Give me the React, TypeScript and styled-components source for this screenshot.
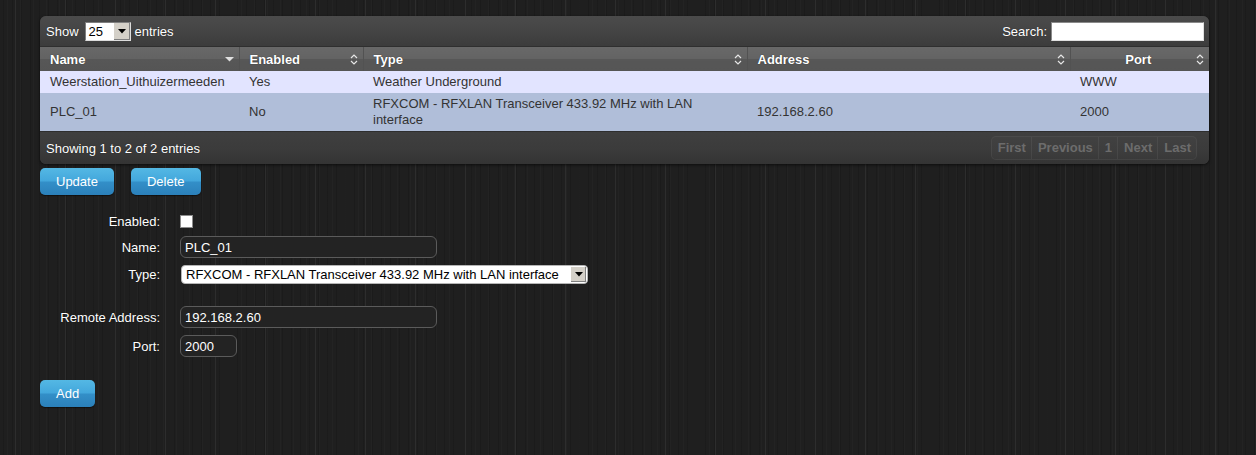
import React from "react";
import styled, { createGlobalStyle } from "styled-components";

const GlobalStyle = createGlobalStyle`
  html, body {
    margin: 0;
    padding: 0;
    min-height: 455px;
  }
  body {
    font-family: "Liberation Sans", Arial, sans-serif;
    font-size: 13px;
    color: #fff;
    background-color: #1f1f1f;
    background-image:
      repeating-linear-gradient(90deg, transparent 0 15px, #2d2d2d 15px 16px, transparent 16px 50px),
      repeating-linear-gradient(90deg, transparent 0 7px, rgba(255,255,255,0.018) 7px 8px, transparent 8px 13px),
      repeating-linear-gradient(90deg, transparent 0 3px, rgba(0,0,0,0.12) 3px 4px, transparent 4px 9px);
  }
`;

const Page = styled.div`
  padding: 16px 0 0 40px;
  width: 1169px;
`;

const Panel = styled.div`
  width: 1169px;
  border-radius: 6px;
  overflow: hidden;
  background: #3b3b3b;
  box-shadow: 0 1px 3px rgba(0, 0, 0, 0.6);
`;

const Toolbar = styled.div`
  height: 30px;
  display: flex;
  align-items: center;
  justify-content: space-between;
  padding: 0 5px 0 6px;
  background: linear-gradient(180deg, #4b4b4b 0%, #454545 45%, #3c3c3c 100%);
  border-bottom: 1px solid #2f2f2f;
  text-shadow: 0 0 1px rgba(0, 0, 0, 0.5);
`;

const ToolGroup = styled.div`
  display: flex;
  align-items: center;
`;

const MiniSelect = styled.div`
  display: flex;
  align-items: stretch;
  width: 46px;
  height: 19px;
  box-sizing: border-box;
  margin: 0 4px 0 6px;
  background: #fff;
  border: 1px solid #7f7f7f;
  border-right-color: #ddd;
  border-bottom-color: #ddd;
  color: #000;
  text-shadow: none;
`;

const MiniValue = styled.span`
  flex: 1;
  padding-left: 3px;
  line-height: 17px;
`;

const ArrowBox = styled.span`
  width: 16px;
  display: flex;
  align-items: center;
  justify-content: center;
  background: #d4d0c8;
  border-left: 1px solid #fff;
  box-shadow: inset -1px -1px 0 #808080;
`;

const SearchInput = styled.input`
  width: 153px;
  height: 19px;
  box-sizing: border-box;
  margin-left: 4px;
  border: 1px solid #8a8a8a;
  border-right-color: #e0e0e0;
  border-bottom-color: #e0e0e0;
  background: #fff;
  padding: 0 3px;
  font: 13px "Liberation Sans", Arial, sans-serif;
  outline: none;
`;

const Table = styled.table`
  width: 100%;
  border-collapse: collapse;
  table-layout: fixed;
`;

const Th = styled.th`
  height: 24px;
  box-sizing: border-box;
  padding: 0 5px 0 10px;
  font-weight: bold;
  font-size: 13px;
  color: #fff;
  text-shadow: 0 0 1px rgba(0, 0, 0, 0.6);
  background: linear-gradient(180deg, #686868 0%, #636363 48%, #575757 52%, #555 100%);
  border-left: 1px solid #525252;
  &:first-child {
    border-left: none;
  }
`;

const HeadInner = styled.div<{ $center?: boolean }>`
  display: flex;
  align-items: center;
  text-align: ${(p) => (p.$center ? "center" : "left")};
`;

const HeadText = styled.span`
  flex: 1;
`;

const Tr = styled.tr<{ $alt?: boolean }>`
  background: ${(p) => (p.$alt ? "#b0bed9" : "#e2e4ff")};
`;

const Td = styled.td`
  padding: 3px 18px 3px 10px;
  line-height: 16px;
  color: #333;
  vertical-align: middle;
`;

const Footer = styled.div`
  height: 32px;
  display: flex;
  align-items: center;
  justify-content: space-between;
  padding: 0 12px 0 6px;
  background: linear-gradient(180deg, #3f3f3f 0%, #3b3b3b 55%, #343434 100%);
  border-top: 1px solid #2e2e2e;
  text-shadow: 0 0 1px rgba(0, 0, 0, 0.5);
`;

const Pager = styled.div`
  display: flex;
  height: 22px;
  border: 1px solid rgba(255, 255, 255, 0.05);
  border-radius: 5px;
  background: rgba(255, 255, 255, 0.02);
  overflow: hidden;
`;

const PageItem = styled.span`
  padding: 0 5px 0 6px;
  line-height: 21px;
  font-weight: bold;
  color: #6c6c6c;
  text-shadow: none;
  border-left: 1px solid rgba(255, 255, 255, 0.06);
  &:first-child {
    border-left: none;
  }
`;

const ButtonRow = styled.div`
  display: flex;
  gap: 17px;
  margin-top: 4px;
`;

const Button = styled.button`
  height: 27px;
  padding: 0 16px;
  border: none;
  border-radius: 5px;
  font: 13px "Liberation Sans", Arial, sans-serif;
  color: #fff;
  background: linear-gradient(180deg, #54b8e4 0%, #43a7dc 48%, #338fc8 52%, #2b80ba 100%);
  box-shadow: 0 1px 1px rgba(0, 0, 0, 0.5);
  cursor: pointer;
`;

const Form = styled.div`
  display: grid;
  grid-template-columns: 120px 1fr;
  column-gap: 20px;
  row-gap: 7px;
  margin-top: 19px;
  align-items: center;
`;

const Label = styled.label`
  text-align: right;
  color: #fff;
  text-shadow: 0 0 1px rgba(0, 0, 0, 0.6);
`;

const FieldCell = styled.div<{ $h?: number }>`
  display: flex;
  align-items: center;
  height: ${(p) => p.$h ?? 22}px;
`;

const Checkbox = styled.input`
  appearance: none;
  width: 13px;
  height: 13px;
  margin: 0;
  box-sizing: border-box;
  background: #fff;
  border: 1px solid #8c8c8c;
`;

const TextInput = styled.input<{ $w: number }>`
  width: ${(p) => p.$w}px;
  height: 22px;
  box-sizing: border-box;
  padding: 0 4px;
  background: #232323;
  border: 1px solid #5b5b5b;
  border-radius: 6px;
  color: #fff;
  font: 13px "Liberation Sans", Arial, sans-serif;
  outline: none;
`;

const TypeSelect = styled.div`
  display: flex;
  align-items: center;
  width: 407px;
  height: 19px;
  box-sizing: border-box;
  margin-left: 1px;
  padding: 0 1px 0 4px;
  background: #fff;
  border: 1px solid #b5b5b5;
  border-radius: 4px;
  color: #000;
`;

const TypeValue = styled.span`
  flex: 1;
  white-space: nowrap;
`;

const TypeArrow = styled(ArrowBox)`
  width: 15px;
  height: 15px;
`;

const Spacer = styled.div`
  grid-column: 1 / span 2;
  height: 8px;
`;

const AddRow = styled.div`
  margin-top: 23px;
`;

const DownTri = () => (
  <svg width="8" height="5" viewBox="0 0 8 5">
    <path d="M0 0 H8 L4 4.5 Z" fill="#000" />
  </svg>
);

const SortBoth = () => (
  <svg width="8" height="11" viewBox="0 0 8 11">
    <path d="M1 4 L4 1 L7 4 M1 7 L4 10 L7 7" fill="none" stroke="#e6e6e6" strokeWidth="1.2" />
  </svg>
);

const SortDesc = () => (
  <svg width="9" height="5" viewBox="0 0 9 5">
    <path d="M0 0 H9 L4.5 4.5 Z" fill="#e0e0e0" />
  </svg>
);

const columns = [
  { key: "Name", w: 199, icon: "desc" },
  { key: "Enabled", w: 124, icon: "both" },
  { key: "Type", w: 384, icon: "both" },
  { key: "Address", w: 323, icon: "both" },
  { key: "Port", w: 139, icon: "both", center: true },
];

const rows = [
  ["Weerstation_Uithuizermeeden", "Yes", "Weather Underground", "", "WWW"],
  ["PLC_01", "No", "RFXCOM - RFXLAN Transceiver 433.92 MHz with LAN interface", "192.168.2.60", "2000"],
];

export default function App() {
  return (
    <>
      <GlobalStyle />
      <Page>
        <Panel>
          <Toolbar>
            <ToolGroup>
              Show
              <MiniSelect>
                <MiniValue>25</MiniValue>
                <ArrowBox>
                  <DownTri />
                </ArrowBox>
              </MiniSelect>
              entries
            </ToolGroup>
            <ToolGroup>
              Search:
              <SearchInput type="text" />
            </ToolGroup>
          </Toolbar>
          <Table>
            <colgroup>
              {columns.map((c) => (
                <col key={c.key} style={{ width: c.w }} />
              ))}
            </colgroup>
            <thead>
              <tr>
                {columns.map((c) => (
                  <Th key={c.key}>
                    <HeadInner $center={c.center}>
                      <HeadText>{c.key}</HeadText>
                      {c.icon === "desc" ? <SortDesc /> : <SortBoth />}
                    </HeadInner>
                  </Th>
                ))}
              </tr>
            </thead>
            <tbody>
              {rows.map((r, i) => (
                <Tr key={i} $alt={i % 2 === 1}>
                  {r.map((v, j) => (
                    <Td key={j}>{v}</Td>
                  ))}
                </Tr>
              ))}
            </tbody>
          </Table>
          <Footer>
            <span>Showing 1 to 2 of 2 entries</span>
            <Pager>
              <PageItem>First</PageItem>
              <PageItem>Previous</PageItem>
              <PageItem>1</PageItem>
              <PageItem>Next</PageItem>
              <PageItem>Last</PageItem>
            </Pager>
          </Footer>
        </Panel>

        <ButtonRow>
          <Button>Update</Button>
          <Button>Delete</Button>
        </ButtonRow>

        <Form>
          <Label>Enabled:</Label>
          <FieldCell $h={15}>
            <Checkbox type="checkbox" />
          </FieldCell>
          <Label>Name:</Label>
          <FieldCell>
            <TextInput $w={257} defaultValue="PLC_01" />
          </FieldCell>
          <Label>Type:</Label>
          <FieldCell $h={19}>
            <TypeSelect>
              <TypeValue>RFXCOM - RFXLAN Transceiver 433.92 MHz with LAN interface</TypeValue>
              <TypeArrow>
                <DownTri />
              </TypeArrow>
            </TypeSelect>
          </FieldCell>
          <Spacer />
          <Label>Remote Address:</Label>
          <FieldCell>
            <TextInput $w={257} defaultValue="192.168.2.60" />
          </FieldCell>
          <Label>Port:</Label>
          <FieldCell>
            <TextInput $w={57} defaultValue="2000" />
          </FieldCell>
        </Form>

        <AddRow>
          <Button>Add</Button>
        </AddRow>
      </Page>
    </>
  );
}
